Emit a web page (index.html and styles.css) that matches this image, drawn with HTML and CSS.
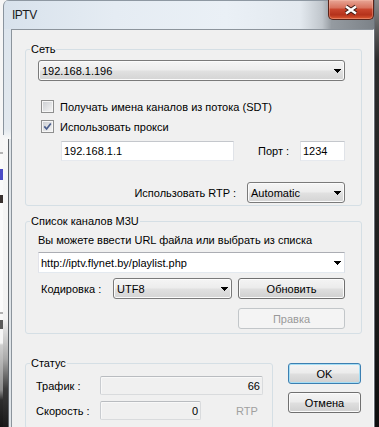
FILE: index.html
```html
<!DOCTYPE html>
<html lang="ru">
<head>
    <meta charset="UTF-8">
    <meta name="viewport" content="width=device-width, initial-scale=1.0">
    <title>IPTV</title>
    <link rel="stylesheet" href="styles.css">
</head>
<body>

<div class="screen">
    <div class="behind-left"></div>

    <div class="window">
        <div class="titlebar">
            <span class="title">IPTV</span>
            <div class="close-btn">
                <svg width="16" height="12" viewBox="0 0 16 12">
                    <path d="M3 2.5 L13 9.5 M13 2.5 L3 9.5" stroke="#3b1a14" stroke-width="4.4"/>
                    <path d="M3 2.5 L13 9.5 M13 2.5 L3 9.5" stroke="#ffffff" stroke-width="2.4"/>
                </svg>
            </div>
        </div>

        <div class="frame">
            <div class="frame-left"></div>

            <div class="client">
                <!-- Network -->
                <fieldset class="group group-net">
                    <legend>Сеть</legend>
                    <div class="group-body net-body">
                        <div class="combo">
                            <span class="value">192.168.1.196</span>
                            <svg class="arrow" width="7" height="4" viewBox="0 0 7 4"><path d="M0 0h7v1h-1v1h-1v1h-1v1h-1v-1h-1v-1h-1v-1h-1z"/></svg>
                        </div>

                        <div class="check-row first">
                            <svg class="check" width="13" height="13" viewBox="0 0 13 13">
                                <defs><linearGradient id="cb1" x1="0" y1="0" x2="1" y2="1"><stop offset="0" stop-color="#cdd0d4"/><stop offset="1" stop-color="#f3f3f3"/></linearGradient></defs>
                                <rect x="0.5" y="0.5" width="12" height="12" fill="#f6f6f6" stroke="#8e8f8f"/>
                                <rect x="2" y="2" width="9" height="9" fill="url(#cb1)"/>
                            </svg>
                            <span>Получать имена каналов из потока (SDT)</span>
                        </div>

                        <div class="check-row">
                            <svg class="check" width="13" height="13" viewBox="0 0 13 13">
                                <defs><linearGradient id="cb2" x1="0" y1="0" x2="1" y2="1"><stop offset="0" stop-color="#cdd0d4"/><stop offset="1" stop-color="#f3f3f3"/></linearGradient></defs>
                                <rect x="0.5" y="0.5" width="12" height="12" fill="#f6f6f6" stroke="#8e8f8f"/>
                                <rect x="2" y="2" width="9" height="9" fill="url(#cb2)"/>
                                <path d="M3.3 6.4 L5.6 9 L9.8 3.4" fill="none" stroke="#4a5e8c" stroke-width="1.7"/>
                            </svg>
                            <span>Использовать прокси</span>
                        </div>

                        <div class="proxy-row">
                            <div class="edit edit-ip">192.168.1.1</div>
                            <span class="port-label">Порт :</span>
                            <div class="edit edit-port">1234</div>
                        </div>

                        <div class="rtp-row">
                            <span class="rtp-label">Использовать RTP :</span>
                            <div class="combo combo-rtp">
                                <span class="value">Automatic</span>
                                <svg class="arrow" width="7" height="4" viewBox="0 0 7 4"><path d="M0 0h7v1h-1v1h-1v1h-1v1h-1v-1h-1v-1h-1v-1h-1z"/></svg>
                            </div>
                        </div>
                    </div>
                </fieldset>

                <!-- Playlist -->
                <fieldset class="group group-m3u">
                    <legend>Список каналов M3U</legend>
                    <div class="group-body m3u-body">
                        <div class="hint">Вы можете ввести URL файла или выбрать из списка</div>

                        <div class="combo editable">
                            <span class="value">http://iptv.flynet.by/playlist.php</span>
                            <svg class="arrow" width="7" height="4" viewBox="0 0 7 4"><path d="M0 0h7v1h-1v1h-1v1h-1v1h-1v-1h-1v-1h-1v-1h-1z"/></svg>
                        </div>

                        <div class="enc-row">
                            <span class="enc-label">Кодировка :</span>
                            <div class="combo combo-enc">
                                <span class="value">UTF8</span>
                                <svg class="arrow" width="7" height="4" viewBox="0 0 7 4"><path d="M0 0h7v1h-1v1h-1v1h-1v1h-1v-1h-1v-1h-1v-1h-1z"/></svg>
                            </div>
                            <button class="btn btn-side">Обновить</button>
                        </div>

                        <div class="edit-row">
                            <button class="btn btn-side" disabled>Правка</button>
                        </div>
                    </div>
                </fieldset>

                <!-- Status + dialog buttons -->
                <div class="bottom-row">
                    <fieldset class="group group-status">
                        <legend>Статус</legend>
                        <div class="group-body status-body">
                            <div class="stat-row">
                                <span class="stat-label">Трафик :</span>
                                <div class="field field-traffic">66</div>
                            </div>
                            <div class="stat-row second">
                                <span class="stat-label">Скорость :</span>
                                <div class="field field-speed">0</div>
                                <span class="rtp-off">RTP</span>
                            </div>
                        </div>
                    </fieldset>

                    <div class="dialog-buttons">
                        <button class="btn btn-default">OK</button>
                        <button class="btn btn-cancel">Отмена</button>
                    </div>
                </div>
            </div>
        </div>
    </div>

    <div class="behind-right"></div>
</div>

</body>
</html>
```

FILE: styles.css
```css
body {
    margin: 0;
    font-family: "Liberation Sans", Arial, sans-serif;
    font-size: 11px;
    color: #000;
}
.screen {
    display: flex;
    width: 379px;
    height: 427px;
    overflow: hidden;
    background: #f4f4f4;
}

/* desktop seen around the dialog */
.behind-left {
    width: 3px;
    flex-shrink: 0;
    background: linear-gradient(to bottom,
        #f6f6f6 0, #f6f6f6 152px, #b4b4b4 152px, #b4b4b4 154px,
        #fafafa 154px, #fafafa 169px, #4a4ac6 169px, #4a4ac6 180px,
        #fafafa 180px, #fafafa 195px, #3a3230 195px, #3a3230 203px,
        #fbfbfb 203px, #fbfbfb 312px, #b0b0b0 312px, #b0b0b0 314px,
        #f8f8f8 314px, #f8f8f8 320px, #5a5a5a 320px, #5a5a5a 329px,
        #f6f6f6 329px, #f6f6f6 343px, #cfcfcf 345px, #8c8c8c 390px,
        #2e2e2e 400px, #151515 427px);
}
.behind-right {
    width: 4px;
    flex-shrink: 0;
    background: linear-gradient(to bottom, #8a8a8a 0, #5a5a5a 30px, #2c2c2c 60px, #1c1c1c 300px, #0e0e0e 427px);
}

/* window frame */
.window {
    width: 372px;
    flex-shrink: 0;
    box-sizing: border-box;
    display: flex;
    flex-direction: column;
    border-right: 1px solid #6a7078;
}
.titlebar {
    height: 29px;
    display: flex;
    align-items: flex-start;
    border-left: 1px solid #8a949e;
    border-top-left-radius: 6px;
    background:
        linear-gradient(to bottom, #8e98a2 0, #8e98a2 1px, transparent 1px),
        linear-gradient(to right, #d8e2ec 0%, #e5ecf3 30%, #eaf0f6 60%, #e3e9ef 80%, #c0c6cc 86%, #959ba1 88.5%, #7c8288 100%);
}
.title {
    margin: 8px 0 0 8px;
    font-size: 12px;
    line-height: 14px;
    letter-spacing: -0.5px;
    color: #1a1a1a;
}
.close-btn {
    margin-left: auto;
    width: 46px;
    height: 20px;
    box-sizing: border-box;
    border: 1px solid #5a241a;
    border-top: none;
    border-radius: 0 0 5px 5px;
    background: linear-gradient(to bottom, #e8a696 0%, #d8735e 40%, #c8452d 50%, #b5321b 78%, #dc5a33 100%);
    box-shadow: inset 0 0 0 1px rgba(255, 200, 180, 0.35);
    display: flex;
    align-items: center;
    justify-content: center;
}
.frame {
    flex: 1;
    display: flex;
    min-height: 0;
}
.frame-left {
    width: 8px;
    flex-shrink: 0;
    background:
        linear-gradient(#8a949e, #8a949e) 0 0 / 1px 106px no-repeat,
        linear-gradient(#5e6368, #5e6368) 5px 110px / 1px 290px no-repeat,
        linear-gradient(to right, transparent 6px, #dfe4e8 6px) 0 110px / 8px 290px no-repeat,
        linear-gradient(to bottom, #dde5ed 0, #e2e8ee 100px, #f7f7f7 110px, #f2f2f2 290px, #a9a9a9 330px, #3c3c3c 360px, #1a1a1a 398px);
}
.client {
    flex: 1;
    min-width: 0;
    background: #f0f0f0;
    border-top: 1px solid #8c949c;
    border-left: 1px solid #8c949c;
    border-right: 1px solid #fdfdfd;
}

/* group boxes */
.group {
    margin: 0 11px 0 13px;
    padding: 0;
    border: 1px solid #d5dfe5;
    border-radius: 3px;
    min-width: 0;
}
.group legend {
    margin-left: 4px;
    padding: 0 1px;
    line-height: 14px;
}
.group-net {
    margin-top: 12px;
}
.group-m3u {
    margin-top: 8px;
}
.net-body {
    padding: 4px 16px 2px 12px;
}
.m3u-body {
    padding: 5px 16px 4px 12px;
}

/* controls */
.combo {
    display: flex;
    align-items: center;
    height: 21px;
    box-sizing: border-box;
    padding: 1px 3px 0 3px;
    border: 1px solid #7a7a7a;
    border-radius: 3px;
    background: linear-gradient(to bottom, #f5f5f5 0%, #ededed 45%, #e0e0e0 55%, #d4d4d4 100%);
    box-shadow: inset 0 0 0 1px #fbfbfb;
}
.combo .value {
    flex: 1;
    white-space: nowrap;
}
.combo.editable {
    padding-left: 2px;
    border-radius: 0;
    border-color: #abadb3 #dbdfe6 #e3e9ef #e2e3ea;
    background: #fff;
    box-shadow: none;
}
.arrow {
    display: block;
    flex-shrink: 0;
}
.edit {
    height: 20px;
    box-sizing: border-box;
    padding: 1px 2px 0;
    line-height: 17px;
    background: #fff;
    border: 1px solid;
    border-color: #c4c7cc #e0e3e8 #e6e9ee #e0e3e8;
}
.btn {
    height: 21px;
    box-sizing: border-box;
    padding: 0;
    font-family: inherit;
    font-size: 11px;
    color: #000;
    border: 1px solid #707070;
    border-radius: 3px;
    background: linear-gradient(to bottom, #f4f4f4 0%, #ececec 45%, #dedede 55%, #d0d0d0 100%);
    box-shadow: inset 0 0 0 1px #fbfbfb;
}
.btn:disabled {
    color: #9a9a9a;
    border-color: #c2c6c9;
    background: #f4f4f4;
    box-shadow: none;
}
.btn-side {
    width: 107px;
}

.check-row {
    display: flex;
    align-items: center;
    gap: 6px;
    height: 13px;
    margin-top: 7px;
    padding-left: 3px;
    white-space: nowrap;
}
.check-row.first {
    margin-top: 19px;
}
.proxy-row {
    display: flex;
    align-items: center;
    margin-top: 8px;
}
.edit-ip {
    width: 173px;
    margin-left: 23px;
}
.port-label {
    margin-left: 24px;
}
.edit-port {
    width: 45px;
    margin-left: auto;
}
.rtp-row {
    display: flex;
    align-items: center;
    justify-content: flex-end;
    margin-top: 21px;
}
.rtp-label {
    margin-right: 11px;
}
.combo-rtp {
    width: 98px;
}

.hint {
    line-height: 14px;
    margin-bottom: 5px;
}
.enc-row {
    display: flex;
    align-items: center;
    margin-top: 5px;
}
.enc-label {
    width: 72px;
    margin-left: 3px;
}
.combo-enc {
    width: 119px;
}
.enc-row .btn {
    margin-left: 6px;
}
.edit-row {
    display: flex;
    justify-content: flex-end;
    margin-top: 9px;
}

/* status + OK / Cancel */
.bottom-row {
    display: flex;
    align-items: flex-start;
    margin-top: 22px;
}
.group-status {
    width: 248px;
    box-sizing: border-box;
    margin: 0 0 0 13px;
}
.status-body {
    padding: 6px 9px 8px 10px;
}
.stat-row {
    display: flex;
    align-items: center;
}
.stat-row.second {
    margin-top: 6px;
}
.stat-label {
    width: 64px;
}
.field {
    height: 19px;
    box-sizing: border-box;
    padding: 1px 2px 0;
    line-height: 16px;
    text-align: right;
    border: 1px solid;
    border-color: #b9bcc0 #d9dbdd #d9dbdd #c9ccd0;
    border-radius: 2px;
    box-shadow: inset 1px 1px 0 #f8f8f8;
}
.field-traffic {
    width: 163px;
}
.field-speed {
    width: 101px;
}
.rtp-off {
    margin-left: 35px;
    color: #a0a0a0;
}
.dialog-buttons {
    display: flex;
    flex-direction: column;
    gap: 8px;
    width: 73px;
    margin: 7px 0 0 15px;
}
.btn-default {
    border-color: #3c7fb1;
    box-shadow: inset 0 0 0 1px #a6def5;
}
```
